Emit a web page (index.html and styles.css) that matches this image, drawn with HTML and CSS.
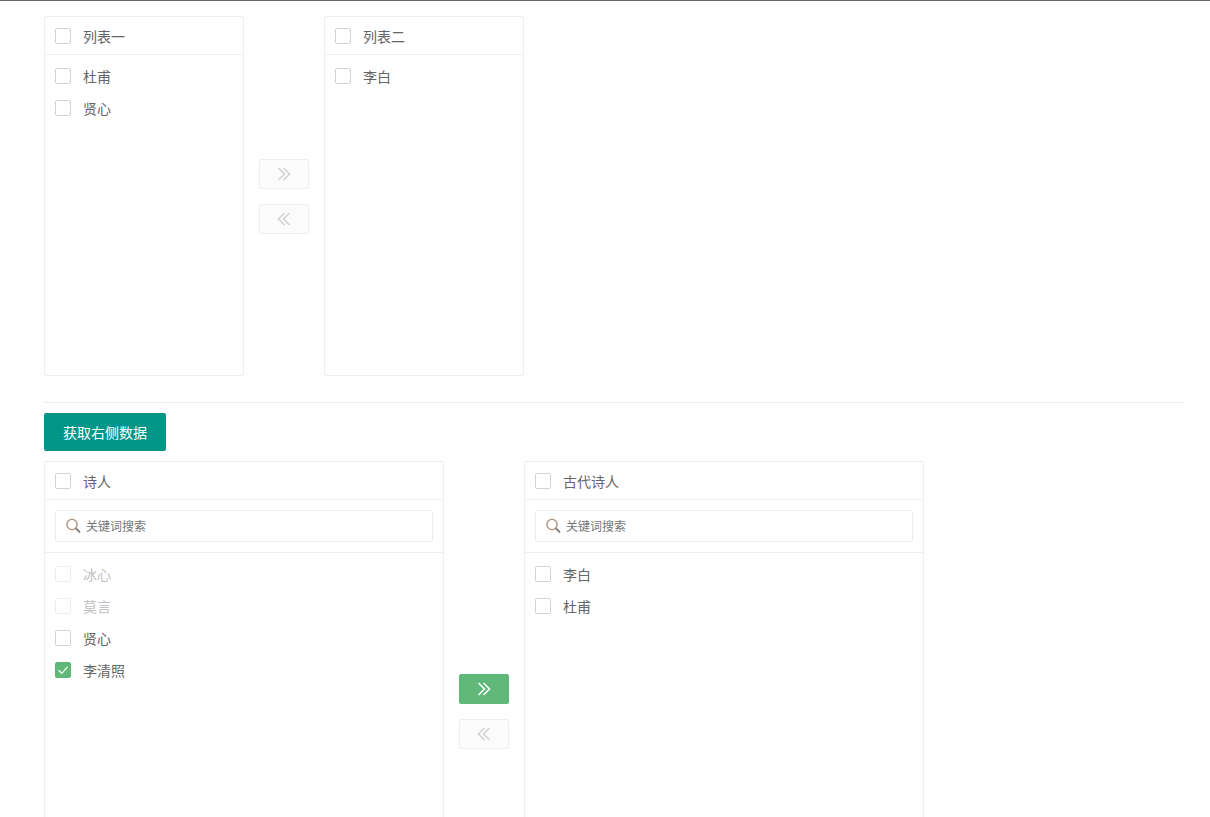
FILE: index.html
```html
<!DOCTYPE html>
<html lang="zh-CN">
<head>
<meta charset="utf-8">
<title>穿梭框</title>
<link rel="stylesheet" href="styles.css">
</head>
<body>
<svg class="defs" width="0" height="0" aria-hidden="true">
  <symbol id="right" viewBox="0 0 14 14"><path d="M1.500 1 7.500 7l-6 6M6.500 1 12.500 7l-6 6" fill="none" stroke="currentColor" stroke-width="1.500"/></symbol>
  <symbol id="left" viewBox="0 0 14 14"><path d="M12.500 1 6.500 7l6 6M7.500 1 1.500 7l6 6" fill="none" stroke="currentColor" stroke-width="1.500"/></symbol>
  <symbol id="search" viewBox="0 0 16 16"><circle cx="6" cy="6.500" r="5.100" fill="none" stroke="#a98b72" stroke-width="1.300"/><path d="M9.800 10.300 14 14.500" stroke="#858585" stroke-width="2"/></symbol>
  <symbol id="check" viewBox="0 0 16 16"><path d="M3.500 8.200 6.800 11.300 12.500 4.800" fill="none" stroke="#fff" stroke-width="1.200"/></symbol>
</svg>
<main class="page">
  <section class="transfer">
    <div class="box">
      <div class="box-head"><span class="cb"></span><span>列表一</span></div>
      <ul class="list">
        <li class="item"><span class="cb"></span><span>杜甫</span></li>
        <li class="item"><span class="cb"></span><span>贤心</span></li>
      </ul>
    </div>
    <div class="actions">
      <button class="arrow" type="button"><svg class="arrow-icon"><use href="#right"/></svg></button>
      <button class="arrow" type="button"><svg class="arrow-icon"><use href="#left"/></svg></button>
    </div>
    <div class="box">
      <div class="box-head"><span class="cb"></span><span>列表二</span></div>
      <ul class="list">
        <li class="item"><span class="cb"></span><span>李白</span></li>
      </ul>
    </div>
  </section>
  <hr class="rule">
  <button class="primary" type="button">获取右侧数据</button>
  <section class="transfer">
    <div class="box wide">
      <div class="box-head"><span class="cb"></span><span>诗人</span></div>
      <div class="search-row"><label class="search"><svg class="search-icon"><use href="#search"/></svg><span class="search-text">关键词搜索</span></label></div>
      <ul class="list">
        <li class="item off"><span class="cb"></span><span>冰心</span></li>
        <li class="item off"><span class="cb"></span><span>莫言</span></li>
        <li class="item"><span class="cb"></span><span>贤心</span></li>
        <li class="item"><span class="cb on"><svg class="check"><use href="#check"/></svg></span><span>李清照</span></li>
      </ul>
    </div>
    <div class="actions">
      <button class="arrow active" type="button"><svg class="arrow-icon"><use href="#right"/></svg></button>
      <button class="arrow" type="button"><svg class="arrow-icon"><use href="#left"/></svg></button>
    </div>
    <div class="box wide">
      <div class="box-head"><span class="cb"></span><span>古代诗人</span></div>
      <div class="search-row"><label class="search"><svg class="search-icon"><use href="#search"/></svg><span class="search-text">关键词搜索</span></label></div>
      <ul class="list">
        <li class="item"><span class="cb"></span><span>李白</span></li>
        <li class="item"><span class="cb"></span><span>杜甫</span></li>
      </ul>
    </div>
  </section>
</main>
</body>
</html>
```
FILE: styles.css
```css
* { box-sizing: border-box; }
html, body { margin: 0; height: 817px; overflow: hidden; background: #fff; }
body {
  border-top: 1px solid #666;
  font-family: "Noto Sans CJK SC", "Noto Sans", sans-serif;
  font-size: 14px;
  color: #666;
}
.defs { position: absolute; }
.page { padding: 15px 26px 0 44px; }
.transfer { display: flex; align-items: center; }
.box {
  width: 200px;
  height: 360px;
  flex: none;
  border: 1px solid #eee;
  border-radius: 2px;
  background: #fff;
}
.box.wide { width: 400px; height: 500px; }
.box-head {
  display: flex;
  align-items: center;
  height: 38px;
  padding: 0 10px;
  border-bottom: 1px solid #eee;
  line-height: 38px;
}
.cb {
  display: flex;
  align-items: center;
  justify-content: center;
  width: 16px;
  height: 16px;
  margin-right: 12px;
  flex: none;
  border: 1px solid #d2d2d2;
  border-radius: 2px;
  background: #fff;
}
.cb.on { border-color: #5fb878; background: #5fb878; }
.check { width: 16px; height: 16px; flex: none; }
.list { margin: 0; padding: 5px 0; list-style: none; }
.item {
  display: flex;
  align-items: center;
  height: 32px;
  padding: 0 10px;
  line-height: 32px;
}
.item.off { color: #c2c2c2; }
.item.off .cb { border-color: #eee; }
.search-row { padding: 10px; border-bottom: 1px solid #eee; }
.search {
  display: flex;
  align-items: center;
  height: 32px;
  padding-left: 10px;
  border: 1px solid #eee;
  border-radius: 2px;
  font-size: 12px;
  color: #757575;
}
.search-icon { width: 16px; height: 16px; margin-right: 4px; flex: none; }
.search-text { padding-bottom: 2px; }
.actions {
  display: flex;
  flex-direction: column;
  gap: 15px;
  width: 50px;
  margin: 0 15px;
  flex: none;
}
.arrow {
  display: flex;
  align-items: center;
  justify-content: center;
  width: 50px;
  height: 30px;
  padding: 0;
  border: 1px solid #eee;
  border-radius: 2px;
  background: #fbfbfb;
  color: #d2d2d2;
}
.arrow.active { border-color: #5fb878; background: #5fb878; color: #fff; }
.arrow-icon { width: 14px; height: 14px; }
.rule { height: 1px; margin: 26px 0 10px; border: 0; background: #eee; }
.primary {
  display: block;
  height: 38px;
  margin-bottom: 10px;
  padding: 0 19px;
  border: 0;
  border-radius: 2px;
  background: #009688;
  color: #fff;
  font: inherit;
  line-height: 38px;
}
```
